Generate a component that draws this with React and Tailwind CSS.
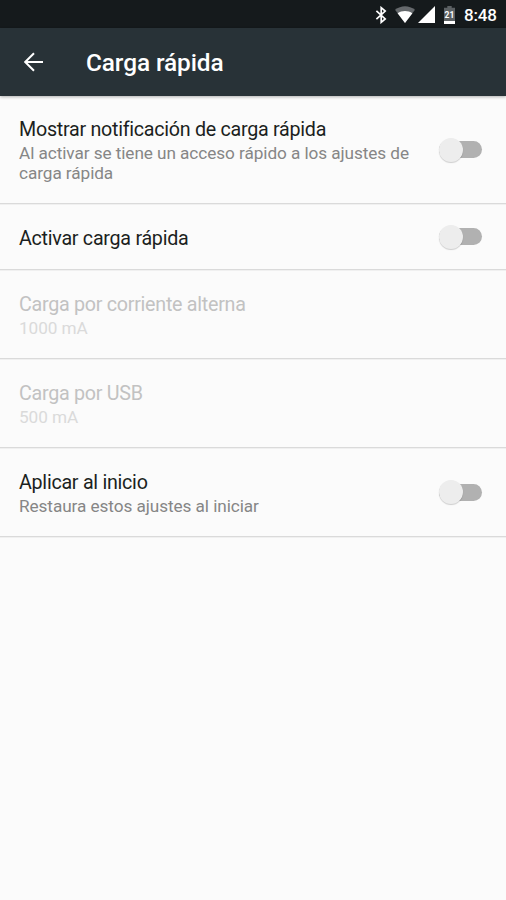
import React, { useState } from "react";
import clsx from "clsx";

const SETTINGS = [
  {
    id: "notification",
    title: "Mostrar notificación de carga rápida",
    summary: "Al activar se tiene un acceso rápido a los ajustes de carga rápida",
    toggle: true,
    height: "h-[108px]",
  },
  { id: "enable", title: "Activar carga rápida", toggle: true, height: "h-[66px]", offset: "pt-1" },
  {
    id: "ac",
    title: "Carga por corriente alterna",
    summary: "1000 mA",
    disabled: true,
    height: "h-[89px]",
    offset: "pt-0.5",
  },
  { id: "usb", title: "Carga por USB", summary: "500 mA", disabled: true, height: "h-[89px]", offset: "pt-0.5" },
  {
    id: "boot",
    title: "Aplicar al inicio",
    summary: "Restaura estos ajustes al iniciar",
    toggle: true,
    height: "h-[89px]",
    offset: "pt-0.5",
  },
];

function StatusBar() {
  return (
    <div className="flex h-7 shrink-0 items-center justify-end bg-[#151a1c] pt-px pr-[10px] text-white">
      {/* Bluetooth */}
      <svg className="mr-2 h-[18px] w-3" viewBox="0 0 12 18" fill="none" stroke="#fff" strokeWidth="1.7">
        <path d="M1.4 4.8 L10.2 12.9 L6.2 16.3 V1.7 L10.2 5.1 L1.4 13.2" />
      </svg>
      {/* Wifi, full fan dimmed with the strength on top */}
      <svg className="mr-[3px] h-[17px] w-[20px]" viewBox="0 0 20 17">
        <path d="M10 17 L0 3.8 C6 -1.1 14 -1.1 20 3.8 Z" fill="#65696c" />
        <path d="M10 17 L2.6 7.2 C7 4.4 13 4.4 17.4 7.2 Z" fill="#fff" />
      </svg>
      {/* Signal */}
      <svg className="mr-[9px] h-[17px] w-[17px]" viewBox="0 0 17 17">
        <path d="M17 0 V17 H0 Z" fill="#fff" />
      </svg>
      {/* Battery */}
      <svg className="mr-[9px] h-[18px] w-[11px]" viewBox="0 0 11 18">
        <path d="M3.3 0 H7.7 V1.7 H11 V15 H0 V1.7 H3.3 Z" fill="#5b6063" />
        <path d="M0 15 H11 V18 H0 Z" fill="#fff" />
        <text x="5.5" y="11.8" textAnchor="middle" fontSize="8.5" fontWeight="700" fill="#fff" fontFamily="Roboto, sans-serif">
          21
        </text>
      </svg>
      <span className="w-[32px] pt-0.5 text-[17px] leading-none font-medium tracking-[-0.15px]">8:48</span>
    </div>
  );
}

function Toolbar() {
  return (
    <header className="z-10 flex h-[68px] shrink-0 items-center bg-[#283237] pl-6 text-white shadow-[0_1px_3px_rgba(0,0,0,0.3)]">
      <button aria-label="Atrás" className="mr-[42px]">
        <svg className="h-[20px] w-[20px]" viewBox="0 0 20 20" fill="none" stroke="#fff" strokeWidth="2">
          <path d="M19 10 H1.5 M10 1.2 L1.2 10 L10 18.8" />
        </svg>
      </button>
      <h1 className="pt-0.5 text-[24.4px] leading-none font-medium tracking-[-0.1px]">Carga rápida</h1>
    </header>
  );
}

function Switch({ checked, onChange, label }) {
  return (
    <button
      role="switch"
      aria-checked={checked}
      aria-label={label}
      onClick={onChange}
      className="flex h-6 w-[43px] shrink-0 items-center"
    >
      <span className={clsx("flex h-[17px] w-full items-center rounded-full", checked ? "bg-[#80cbc4]" : "bg-[#b1b1b1]")}>
        <span
          className={clsx(
            "size-6 rounded-full shadow-[0_1px_1px_rgba(0,0,0,0.18)]",
            checked ? "ml-auto bg-[#009688]" : "bg-[#ededed]"
          )}
        />
      </span>
    </button>
  );
}

function SettingRow({ item, checked, onToggle }) {
  return (
    <li
      className={clsx(
        "flex items-center border-b border-[#dadada] pr-6 pl-[19px] shadow-[0_1px_0_#f0f0f0]",
        item.height
      )}
    >
      <div className={clsx("flex-1", item.offset)}>
        <p
          className={clsx(
            "text-[19.7px] leading-[26px] tracking-[-0.27px]",
            item.disabled ? "text-[#c2c2c2]" : "text-[#1b1f21]"
          )}
        >
          {item.title}
        </p>
        {item.summary && (
          <p
            className={clsx(
              "w-[400px] text-[17.2px] leading-[20px] tracking-[-0.07px]",
              item.disabled ? "text-[#dadada]" : "text-[#868686]"
            )}
          >
            {item.summary}
          </p>
        )}
      </div>
      {item.toggle && <Switch checked={checked} onChange={onToggle} label={item.title} />}
    </li>
  );
}

export default function App() {
  const [enabled, setEnabled] = useState({});

  const toggle = (id) => setEnabled((prev) => ({ ...prev, [id]: !prev[id] }));

  return (
    <div className="flex h-[900px] w-[506px] flex-col overflow-hidden bg-[#fbfbfb] font-['Roboto',sans-serif]">
      <StatusBar />
      <Toolbar />
      <ul>
        {SETTINGS.map((item) => (
          <SettingRow key={item.id} item={item} checked={!!enabled[item.id]} onToggle={() => toggle(item.id)} />
        ))}
      </ul>
    </div>
  );
}
